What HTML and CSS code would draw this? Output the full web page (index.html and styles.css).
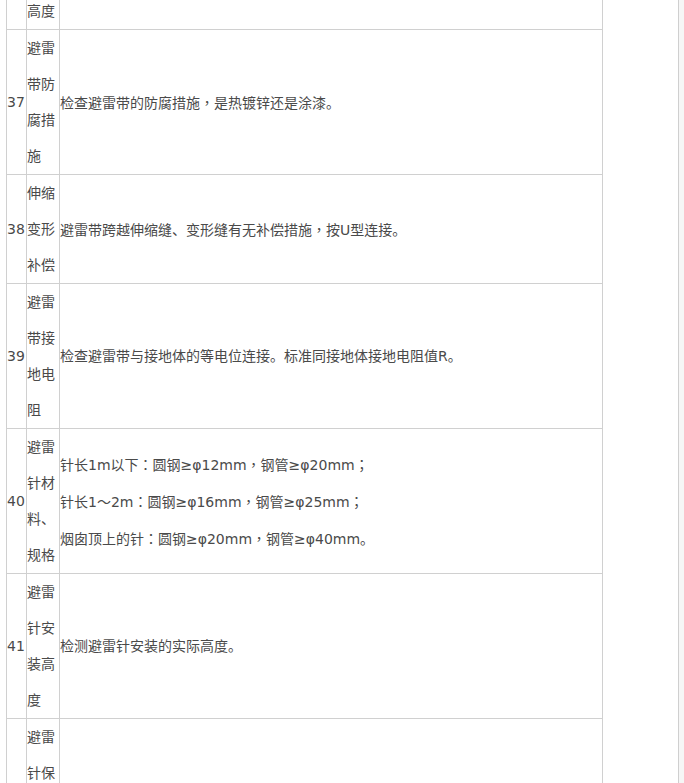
FILE: index.html
```html
<!DOCTYPE html>
<html lang="zh-CN">
<head>
<meta charset="utf-8">
<title>避雷检测项目</title>
<link rel="stylesheet" href="styles.css">
</head>
<body>
<div class="page">
  <table class="spec">
    <colgroup>
      <col class="c-no">
      <col class="c-item">
      <col class="c-desc">
    </colgroup>
    <tbody>
      <tr>
        <td class="no">36</td>
        <td class="item">支持卡子高度</td>
        <td class="desc">检测支持卡子的高度。</td>
      </tr>
      <tr>
        <td class="no">37</td>
        <td class="item">避雷带防腐措施</td>
        <td class="desc">检查避雷带的防腐措施<span class="p" lang="zh-Hant">，</span>是热镀锌还是涂漆。</td>
      </tr>
      <tr>
        <td class="no">38</td>
        <td class="item">伸缩变形补偿</td>
        <td class="desc">避雷带跨越伸缩缝、变形缝有无补偿措施<span class="p" lang="zh-Hant">，</span>按U型连接。</td>
      </tr>
      <tr>
        <td class="no">39</td>
        <td class="item">避雷带接地电阻</td>
        <td class="desc">检查避雷带与接地体的等电位连接。标准同接地体接地电阻值R。</td>
      </tr>
      <tr>
        <td class="no">40</td>
        <td class="item">避雷针材料、规格</td>
        <td class="desc">
          <p class="line">针长1m以下<span class="p" lang="zh-Hant">：</span>圆钢≥φ12mm<span class="p" lang="zh-Hant">，</span>钢管≥φ20mm<span class="p" lang="zh-Hant">；</span></p>
          <p class="line">针长1<span class="p" lang="zh-Hant">～</span>2m<span class="p" lang="zh-Hant">：</span>圆钢≥φ16mm<span class="p" lang="zh-Hant">，</span>钢管≥φ25mm<span class="p" lang="zh-Hant">；</span></p>
          <p class="line">烟囱顶上的针<span class="p" lang="zh-Hant">：</span>圆钢≥φ20mm<span class="p" lang="zh-Hant">，</span>钢管≥φ40mm。</p>
        </td>
      </tr>
      <tr>
        <td class="no">41</td>
        <td class="item">避雷针安装高度</td>
        <td class="desc">检测避雷针安装的实际高度。</td>
      </tr>
      <tr>
        <td class="no">42</td>
        <td class="item">避雷针保护范围</td>
        <td class="desc">按滚球法计算避雷针的保护范围。</td>
      </tr>
    </tbody>
  </table>
</div>
</body>
</html>
```

FILE: styles.css
```css
html, body {
  margin: 0;
  padding: 0;
}
body {
  background: #f6f6f6;
  font-family: "DejaVu Sans", "Noto Sans CJK SC", sans-serif;
  font-size: 14px;
  color: #4a4a4a;
  text-spacing-trim: space-all;
}
.page {
  width: 678px;
  min-height: 783px;
  background: #fff;
  border-right: 1px solid #cfcfcf;
  overflow: hidden;
}
.spec {
  border-collapse: collapse;
  table-layout: fixed;
  width: 596px;
  margin: -80px 0 0 6px;
}
.c-no { width: 20px; }
.c-item { width: 33px; }
.c-desc { width: 543px; }
.spec td {
  border: 1px solid #d0d0d0;
  padding: 0;
  line-height: 36px;
  vertical-align: middle;
  word-break: break-all;
}
.line {
  margin: 0;
}
.p {
  font-family: "Noto Sans CJK TC", sans-serif;
}
```
